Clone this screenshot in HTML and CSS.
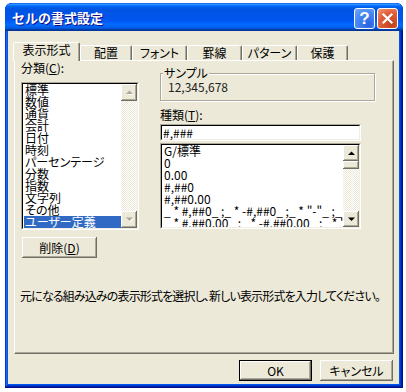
FILE: index.html
```html
<!DOCTYPE html>
<html lang="ja">
<head>
    <meta charset="UTF-8">
    <title>セルの書式設定</title>
    <link rel="stylesheet" href="styles.css">
</head>
<body>
    <div class="window">
        <div class="titlebar">
            <span class="title">セルの書式設定</span>
            <div class="title-buttons">
                <div class="title-btn help">?</div>
                <div class="title-btn close">
                    <svg width="13" height="13" viewBox="0 0 13 13"><path d="M2.5 2.5 L10.5 10.5 M10.5 2.5 L2.5 10.5" stroke="#fff" stroke-width="2.2" stroke-linecap="square"/></svg>
                </div>
            </div>
        </div>

        <div class="client">
            <div class="tabs">
                <div class="tab active" style="width:67px">表示形式</div>
                <div class="tab" style="width:52px">配置</div>
                <div class="tab" style="width:55px">フォント</div>
                <div class="tab" style="width:55px">罫線</div>
                <div class="tab" style="width:55px">パターン</div>
                <div class="tab" style="width:51px">保護</div>
            </div>

            <div class="panel">
                <div class="columns">
                    <div class="col-left">
                        <div class="label">分類(<u>C</u>):</div>
                        <div class="listbox cat-list">
                            <div class="listbox-inner">
                                <div class="items">
                                    <div class="item">標準</div>
                                    <div class="item">数値</div>
                                    <div class="item">通貨</div>
                                    <div class="item">会計</div>
                                    <div class="item">日付</div>
                                    <div class="item">時刻</div>
                                    <div class="item">パーセンテージ</div>
                                    <div class="item">分数</div>
                                    <div class="item">指数</div>
                                    <div class="item">文字列</div>
                                    <div class="item">その他</div>
                                    <div class="item selected">ユーザー定義</div>
                                </div>
                                <div class="scrollbar disabled">
                                    <div class="sb-btn"><svg width="7" height="5" viewBox="0 0 7 5"><path d="M3.5 0.5 L7 4 H0Z" fill="#aca899"/></svg></div>
                                    <div class="sb-track"></div>
                                    <div class="sb-btn"><svg width="7" height="5" viewBox="0 0 7 5"><path d="M0 0.5 H7 L3.5 4Z" fill="#aca899"/></svg></div>
                                </div>
                            </div>
                        </div>
                        <div class="btn del-btn">削除(<u>D</u>)</div>
                    </div>

                    <div class="col-right">
                        <div class="sample">
                            <span class="sample-title">サンプル</span>
                            <span class="sample-value">12,345,678</span>
                        </div>
                        <div class="label type-label">種類(<u>T</u>):</div>
                        <div class="listbox textbox">
                            <div class="listbox-inner">#,###</div>
                        </div>
                        <div class="listbox type-list">
                            <div class="listbox-inner">
                                <div class="items">
                                    <div class="item">G/標準</div>
                                    <div class="item">0</div>
                                    <div class="item">0.00</div>
                                    <div class="item">#,##0</div>
                                    <div class="item">#,##0.00</div>
                                    <div class="item">_ * #,##0_ ;_ * -#,##0_ ;_ * "-"_ ;_ @_ </div>
                                    <div class="item">_ * #,##0.00_ ;_ * -#,##0.00_ ;_ * "-"??_ ;_ @_ </div>
                                    <div class="item">_ ¥* #,##0_ ;_ ¥* -#,##0_ ;_ ¥* "-"_ ;_ @_ </div>
                                </div>
                                <div class="scrollbar">
                                    <div class="sb-btn"><svg width="7" height="5" viewBox="0 0 7 5"><path d="M3.5 0.5 L7 4 H0Z" fill="#000"/></svg></div>
                                    <div class="sb-thumb"></div>
                                    <div class="sb-track"></div>
                                    <div class="sb-btn"><svg width="7" height="5" viewBox="0 0 7 5"><path d="M0 0.5 H7 L3.5 4Z" fill="#000"/></svg></div>
                                </div>
                            </div>
                        </div>
                    </div>
                </div>

                <p class="desc">元になる組み込みの表示形式を選択し、新しい表示形式を入力してください。</p>
            </div>

            <div class="footer">
                <div class="btn default">OK</div>
                <div class="btn">キャンセル</div>
            </div>
        </div>
    </div>
</body>
</html>
```

FILE: styles.css
```css
html, body {
    margin: 0;
    padding: 0;
}

*, *::before, *::after {
    box-sizing: border-box;
}

body {
    background: #fff;
    font-family: "Noto Sans CJK JP", sans-serif;
    font-size: 12px;
    color: #000;
    font-feature-settings: "palt";
}

u {
    text-decoration: underline;
    text-underline-offset: 1px;
}

/* window frame */
.window {
    width: 398px;
    height: 385px;
    margin: 3px 0 0 5px;
    background: #0055ea;
    border-radius: 7px 7px 0 0;
    box-shadow: inset -1px -1px #00138c, inset 1px 1px #0831d9, inset -2px -2px #001ea0, inset 2px 2px #166aee, inset -3px -3px #003bda, inset 3px 3px #0855dd;
    display: flex;
    flex-direction: column;
}

.titlebar {
    height: 28px;
    border-radius: 7px 7px 0 0;
    background: linear-gradient(180deg, #0058ee 0%, #3593ff 4%, #288eff 6%, #127dff 8%, #036ffc 10%, #0262ee 14%, #0057e5 20%, #0054e3 24%, #0055eb 56%, #005bf5 66%, #026afe 76%, #0062ef 86%, #0052d6 92%, #0040ab 94%, #003092 100%);
    display: flex;
    align-items: center;
    justify-content: space-between;
    padding: 0 5px 0 7px;
}

.title {
    color: #fff;
    font-size: 13px;
    font-weight: bold;
    font-feature-settings: normal;
    text-shadow: 1px 1px #0f1089;
}

.title-buttons {
    display: flex;
    gap: 2px;
    margin-top: 3px;
}

.title-btn {
    width: 21px;
    height: 21px;
    border: 1px solid #fff;
    border-radius: 3px;
    display: flex;
    align-items: center;
    justify-content: center;
    color: #fff;
}

.title-btn.help {
    background: radial-gradient(circle at 70% 80%, #2a63e0 0%, #4a8af5 60%, #74a8fb 100%);
    font-family: "Liberation Sans", sans-serif;
    font-size: 17px;
    font-weight: bold;
    line-height: 1;
}

.title-btn.close {
    background: radial-gradient(circle at 70% 80%, #c2401b 0%, #e2603a 60%, #f09b80 100%);
}

/* dialog body */
.client {
    flex: 1;
    margin: 0 4px 4px 3px;
    background: #ece9d8;
    padding: 11px 5px 0 6px;
    display: flex;
    flex-direction: column;
}

.tabs {
    display: flex;
    align-items: flex-end;
    height: 18px;
    margin-left: -1px;
    position: relative;
    z-index: 1;
}

.tab {
    height: 15px;
    line-height: 13px;
    text-align: center;
    background: #ece9d8;
    border: 1px solid;
    border-bottom: none;
    border-color: #fff #716f64 #fff #fff;
    border-radius: 2px 2px 0 0;
    box-shadow: inset -1px 0 #aca899;
}

.tab.active {
    height: 19px;
    margin-bottom: -1px;
    line-height: 14px;
}

.panel {
    height: 294px;
    border: 1px solid;
    border-color: #fff #716f64 #716f64 #fff;
    box-shadow: inset -1px -1px #aca899;
    padding: 1px 6px 0 6px;
}

.columns {
    display: flex;
}

.col-left {
    width: 118px;
}

.col-right {
    width: 215px;
    margin-left: 21px;
}

.label {
    height: 12px;
    line-height: 12px;
    white-space: nowrap;
}

/* sunken boxes */
.listbox {
    border: 1px solid;
    border-color: #aca899 #fff #fff #aca899;
}

.listbox-inner {
    height: 100%;
    border: 1px solid;
    border-color: #000 #f1efe2 #f1efe2 #000;
    background: #fff;
    display: flex;
}

.items {
    flex: 1;
    overflow: hidden;
    padding-left: 1px;
}

.item {
    height: 12px;
    line-height: 12px;
    padding-left: 1px;
    white-space: pre;
}

.item.selected {
    background: #316ac5;
    color: #fff;
}

.scrollbar {
    width: 16px;
    display: flex;
    flex-direction: column;
}

.sb-btn {
    height: 16px;
    background: #ece9d8;
    box-shadow: inset -1px -1px #716f64, inset 1px 1px #fff, inset -2px -2px #aca899;
    display: flex;
    align-items: center;
    justify-content: center;
}

.cat-list .sb-btn {
    height: 17px;
}

.scrollbar.disabled svg {
    filter: drop-shadow(1px 1px 0 #fff);
}

.sb-thumb {
    height: 8px;
    background: #ece9d8;
    box-shadow: inset -1px -1px #716f64, inset 1px 1px #fff, inset -2px -2px #aca899;
}

.sb-track {
    flex: 1;
    background: repeating-conic-gradient(#fff 0 25%, #ece9d8 0 50%) 0 0 / 2px 2px;
}

.cat-list {
    margin-top: 8px;
    height: 148px;
}

/* buttons */
.btn {
    width: 73px;
    height: 21px;
    background: #ece9d8;
    box-shadow: inset -1px -1px #716f64, inset 1px 1px #fff, inset -2px -2px #aca899;
    display: flex;
    align-items: center;
    justify-content: center;
    line-height: 12px;
}

.btn.default {
    box-shadow: inset 0 0 0 1px #000, inset -2px -2px #716f64, inset 2px 2px #fff, inset -3px -3px #aca899;
}

.del-btn {
    width: 75px;
    margin: 7px 0 0 1px;
}

/* right column */
.sample {
    position: relative;
    margin-top: 11px;
    height: 28px;
    border: 1px solid #aca899;
    box-shadow: inset 1px 1px #fff, 1px 1px #fff;
    display: flex;
    align-items: center;
    padding-left: 7px;
}

.sample-title {
    position: absolute;
    top: -7px;
    left: 2px;
    padding: 0 1px;
    background: #ece9d8;
    line-height: 12px;
}

.sample-value {
    color: #222;
    line-height: 12px;
}

.type-label {
    margin-top: 8px;
}

.textbox {
    width: 201px;
    height: 17px;
    margin-top: 3px;
}

.textbox .listbox-inner {
    padding-left: 1px;
    line-height: 13px;
}

.type-list {
    width: 201px;
    height: 86px;
    margin-top: 2px;
}

.desc {
    margin: 32px 0 0 -1px;
    line-height: 12px;
    letter-spacing: -0.85px;
    white-space: nowrap;
}

.footer {
    display: flex;
    justify-content: flex-end;
    gap: 8px;
    margin-top: 6px;
    padding-right: 1px;
}
```
